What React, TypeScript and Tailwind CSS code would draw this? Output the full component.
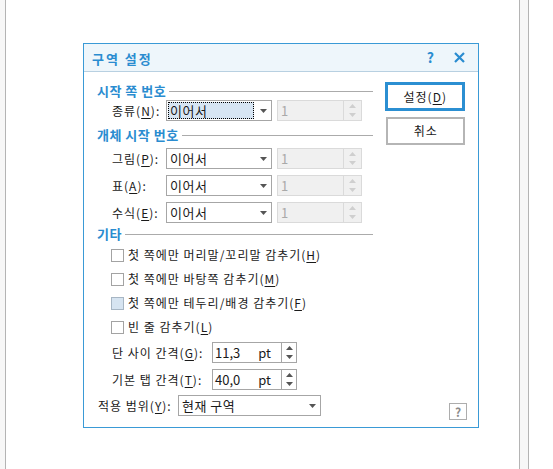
import type { ReactNode } from 'react'

const font = { fontFamily: '"Noto Sans CJK KR", "Noto Sans", sans-serif' }

function U({ children }: { children: ReactNode }) {
  return <span className="underline underline-offset-2">{children}</span>
}

function Arrow({ color = '#555' }: { color?: string }) {
  return (
    <svg width="7" height="4" viewBox="0 0 7 4" className="shrink-0">
      <path d="M0 0h7L3.5 4z" fill={color} />
    </svg>
  )
}

function SpinArrows({ color }: { color: string }) {
  return (
    <div className="flex flex-col items-center gap-[5px]">
      <svg width="7" height="4" viewBox="0 0 7 4">
        <path d="M0 4h7L3.5 0z" fill={color} />
      </svg>
      <svg width="7" height="4" viewBox="0 0 7 4">
        <path d="M0 0h7L3.5 4z" fill={color} />
      </svg>
    </div>
  )
}

function Combo({ value, focused = false, width }: { value: string; focused?: boolean; width: string }) {
  return (
    <div className={`flex h-[21px] items-stretch border border-[#a6a6a6] bg-white ${width}`}>
      <div className="flex flex-1 p-px">
        <div
          className={`flex flex-1 items-center pl-[1px] text-[13px] tracking-[0.5px] text-[#1a1a1a] ${
            focused ? 'border border-dotted border-black bg-[#d7e5f3]' : 'border border-transparent'
          }`}
        >
          {value}
        </div>
      </div>
      <div className="flex w-[16px] items-center justify-center">
        <Arrow />
      </div>
    </div>
  )
}

function DisabledSpin() {
  return (
    <div className="flex h-[21px] w-[85px] border border-[#dadada] bg-[#f0f0f0]">
      <div className="flex flex-1 items-center pl-[3px] text-[13px] text-[#a9a9a9]">1</div>
      <div className="flex w-[18px] items-center justify-center border-l border-[#dadada]">
        <SpinArrows color="#cfcfcf" />
      </div>
    </div>
  )
}

function Spin({ value }: { value: string }) {
  return (
    <div className="flex h-[21px] w-[85px] border border-[#a6a6a6] bg-white">
      <div className="flex flex-1 items-center justify-between pl-[2px] pr-[10px] text-[13px] text-[#1a1a1a]">
        <span>{value}</span>
        <span>pt</span>
      </div>
      <div className="flex w-[15px] items-center justify-center border-l border-[#a6a6a6]">
        <SpinArrows color="#555" />
      </div>
    </div>
  )
}

function Heading({ title }: { title: string }) {
  return (
    <div className="flex h-[16px] items-center gap-[3px]">
      <span className="text-[13px] font-bold tracking-[0.5px] text-[#2a8cd0]">{title}</span>
      <div className="h-px flex-1 bg-[#ababab]" />
    </div>
  )
}

function NumberRow({ label, focused = false }: { label: ReactNode; focused?: boolean }) {
  return (
    <div className="flex h-[21px] items-center pl-[15px]">
      <span className="w-[54px] text-[12px] tracking-[1px] text-[#1a1a1a]">{label}</span>
      <Combo value="이어서" focused={focused} width="w-[106px]" />
      <div className="ml-[5px]">
        <DisabledSpin />
      </div>
    </div>
  )
}

function Check({ label, shaded = false }: { label: ReactNode; shaded?: boolean }) {
  return (
    <div className="flex h-[24px] items-center gap-[4px] pl-[14px]">
      <div
        className={`h-[13px] w-[13px] border ${
          shaded ? 'border-[#a7b6c4] bg-[#d6e4f1]' : 'border-[#a3a3a3] bg-white'
        }`}
      />
      <span className="text-[12px] tracking-[1px] text-[#1a1a1a]">{label}</span>
    </div>
  )
}

function SpinRow({ label, value }: { label: ReactNode; value: string }) {
  return (
    <div className="flex h-[21px] items-center pl-[15px]">
      <span className="w-[100px] text-[12px] tracking-[1px] text-[#1a1a1a]">{label}</span>
      <Spin value={value} />
    </div>
  )
}

export default function App() {
  return (
    <div className="flex h-[469px] w-[553px] bg-white" style={font}>
      <div className="w-[6px] border-r border-[#b4b4b4] bg-[#f7f7f7]" />

      <div className="w-[513px] pl-[77px] pt-[43px]">
        <div className="flex h-[385px] w-[396px] flex-col border border-[#3a9ad6] bg-white">
          <div className="flex h-[28px] items-center justify-between border-b border-[#b8d0e1] bg-[#eef6fb] pl-[8px] pr-[13px]">
            <span className="pt-[2px] text-[13px] font-bold tracking-[2px] text-[#2a8cd0]">구역 설정</span>
            <div className="flex items-center gap-[20px]">
              <span className="text-[14px] font-bold text-[#2a8cd0]">?</span>
              <svg width="11" height="11" viewBox="0 0 11 11">
                <path d="M1 1l9 9M10 1l-9 9" stroke="#2a8cd0" strokeWidth="2.2" />
              </svg>
            </div>
          </div>

          <div className="flex flex-1 gap-[12px] pl-[13px] pr-[11px]">
            <div className="flex w-[277px] flex-col pt-[11px]">
              <Heading title="시작 쪽 번호" />
              <div className="mt-[1px]">
                <NumberRow
                  label={
                    <>
                      종류(<U>N</U>):
                    </>
                  }
                  focused
                />
              </div>
              <div className="mt-[6px]">
                <Heading title="개체 시작 번호" />
              </div>
              <div className="mt-[5px] flex flex-col gap-[6px]">
                <NumberRow
                  label={
                    <>
                      그림(<U>P</U>):
                    </>
                  }
                />
                <NumberRow
                  label={
                    <>
                      표(<U>A</U>):
                    </>
                  }
                />
                <NumberRow
                  label={
                    <>
                      수식(<U>E</U>):
                    </>
                  }
                />
              </div>
              <div className="mt-[3px]">
                <Heading title="기타" />
              </div>
              <div className="mt-px flex flex-col">
                <Check
                  label={
                    <>
                      첫 쪽에만 머리말/꼬리말 감추기(<U>H</U>)
                    </>
                  }
                />
                <Check
                  label={
                    <>
                      첫 쪽에만 바탕쪽 감추기(<U>M</U>)
                    </>
                  }
                />
                <Check
                  shaded
                  label={
                    <>
                      첫 쪽에만 테두리/배경 감추기(<U>F</U>)
                    </>
                  }
                />
                <Check
                  label={
                    <>
                      빈 줄 감추기(<U>L</U>)
                    </>
                  }
                />
              </div>
              <div className="mt-[3px] flex flex-col gap-[6px]">
                <SpinRow
                  value="11,3"
                  label={
                    <>
                      단 사이 간격(<U>G</U>):
                    </>
                  }
                />
                <SpinRow
                  value="40,0"
                  label={
                    <>
                      기본 탭 간격(<U>T</U>):
                    </>
                  }
                />
              </div>
              <div className="mt-[5px] flex h-[21px] items-center pl-[1px]">
                <span className="w-[80px] text-[12px] tracking-[1px] text-[#1a1a1a]">
                  적용 범위(<U>Y</U>):
                </span>
                <Combo value="현재 구역" width="w-[143px]" />
              </div>
            </div>

            <div className="flex w-[82px] flex-col pb-[7px] pt-[10px]">
              <button className="h-[29px] w-[80px] border-[3px] border-[#2b8fd2] bg-white text-[12px] tracking-[1px] text-[#1a1a1a]">
                설정(<U>D</U>)
              </button>
              <button className="mt-[6px] ml-px h-[28px] w-[79px] border-2 border-[#b5b5b5] bg-white text-[12px] tracking-[1px] text-[#1a1a1a]">
                취소
              </button>
              <div className="mt-auto flex justify-end">
                <div className="flex h-[17px] w-[18px] items-center justify-center border border-[#adadad] bg-white text-[12px] font-bold text-[#8a8a8a]">
                  ?
                </div>
              </div>
            </div>
          </div>
        </div>
      </div>

      <div className="w-[10px] border-x border-[#b4b4b4] bg-[#f7f7f7]" />
    </div>
  )
}
